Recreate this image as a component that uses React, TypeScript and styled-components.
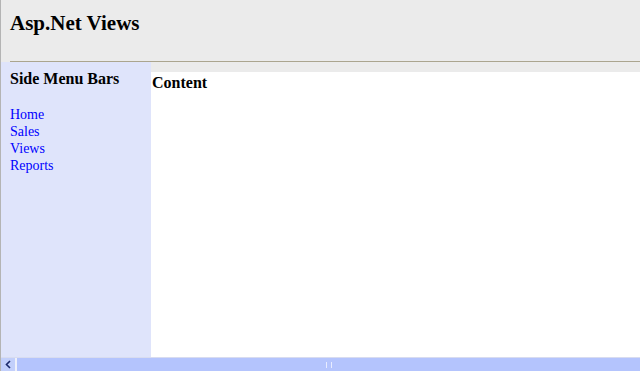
import * as React from "react";
import styled, { createGlobalStyle } from "styled-components";

const GlobalStyle = createGlobalStyle`
  html, body {
    margin: 0;
    padding: 0;
  }
  body {
    font-family: "Liberation Serif", "Times New Roman", serif;
    background: #ebebeb;
  }
`;

const Page = styled.div`
  height: 371px;
  display: flex;
  flex-direction: column;
  background: #ebebeb;
  border-left: 1px solid #b4b4b4;
  box-sizing: border-box;
`;

const Header = styled.header`
  height: 61px;
  padding-left: 9px;
  box-sizing: border-box;
`;

const Title = styled.h1`
  margin: 0;
  padding-top: 11px;
  font-size: 21px;
  line-height: 24px;
  font-weight: 700;
  color: #000;
`;

const Rule = styled.hr`
  margin: 0 0 0 9px;
  border: 0;
  border-top: 1px solid #aba58f;
  height: 0;
`;

const Main = styled.div`
  flex: 1;
  display: flex;
  min-height: 0;
`;

const Sidebar = styled.nav`
  width: 150px;
  background: #dfe4fb;
  padding: 8px 0 0 9px;
  box-sizing: border-box;
`;

const SideTitle = styled.h3`
  margin: 0 0 18px;
  font-size: 16px;
  line-height: 18px;
  font-weight: 700;
  color: #000;
`;

const MenuList = styled.ul`
  margin: 0;
  padding: 0;
  list-style: none;
`;

const MenuItem = styled.li`
  font-size: 14px;
  line-height: 17px;
`;

const MenuLink = styled.a`
  color: #0000ff;
  text-decoration: none;
`;

const Content = styled.main`
  flex: 1;
  margin-top: 10px;
  background: #fff;
  padding: 2px 0 0 1px;
`;

const ContentTitle = styled.h3`
  margin: 0;
  font-size: 16px;
  line-height: 18px;
  font-weight: 700;
  color: #000;
`;

const Scrollbar = styled.div`
  height: 13px;
  display: flex;
  background: #b9c6fb;
  border-top: 1px solid #d8dcf0;
`;

const ScrollButton = styled.div`
  width: 14px;
  display: flex;
  align-items: center;
  justify-content: center;
  background: #c2cffb;
  border-right: 2px solid #eef0fb;
`;

const ScrollThumb = styled.div`
  flex: 1;
  display: flex;
  align-items: center;
  justify-content: center;
  background: #b4c4fd;
`;

const Grip = styled.div`
  width: 4px;
  height: 6px;
  border-left: 1px solid #e8ecff;
  border-right: 1px solid #e8ecff;
`;

const menu = ["Home", "Sales", "Views", "Reports"];

function App() {
  return (
    <>
      <GlobalStyle />
      <Page>
        <Header>
          <Title>Asp.Net Views</Title>
        </Header>
        <Rule />
        <Main>
          <Sidebar>
            <SideTitle>Side Menu Bars</SideTitle>
            <MenuList>
              {menu.map((item) => (
                <MenuItem key={item}>
                  <MenuLink href="#">{item}</MenuLink>
                </MenuItem>
              ))}
            </MenuList>
          </Sidebar>
          <Content>
            <ContentTitle>Content</ContentTitle>
          </Content>
        </Main>
        <Scrollbar>
          <ScrollButton>
            <svg width="6" height="9" viewBox="0 0 6 9">
              <path d="M5 1 L1.5 4.5 L5 8" stroke="#1c2a6a" strokeWidth="1.6" fill="none" />
            </svg>
          </ScrollButton>
          <ScrollThumb>
            <Grip />
          </ScrollThumb>
        </Scrollbar>
      </Page>
    </>
  );
}

export default App;
